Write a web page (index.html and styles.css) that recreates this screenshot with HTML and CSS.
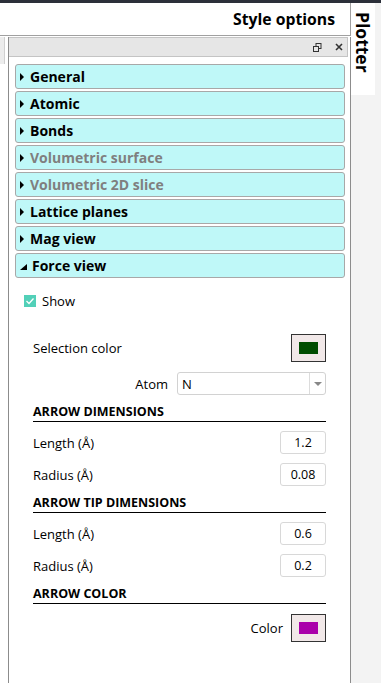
FILE: index.html
```html
<!DOCTYPE html>
<html lang="en">
<head>
  <meta charset="UTF-8" />
  <meta name="viewport" content="width=device-width, initial-scale=1.0"/>
  <title>Style options</title>
  <link rel="stylesheet" href="styles.css">
</head>
<body>
  <div class="topbar"></div>
  <div class="main">
    <div class="left">
      <div class="header">Style options</div>
      <div class="dock">
        <div class="gutter"><div class="stub"></div></div>
        <div class="panel">
          <div class="titlebar">
            <svg class="float-icon" width="9" height="9" viewBox="0 0 9 9">
              <rect x="3" y="0.5" width="5" height="5" fill="none" stroke="#333" stroke-width="1"/>
              <rect x="0.5" y="3.5" width="5" height="5" fill="#e6e6e6" stroke="#333" stroke-width="1"/>
            </svg>
            <svg class="close-icon" width="8" height="8" viewBox="0 0 8 8">
              <path d="M1 1 L7 7 M7 1 L1 7" stroke="#333" stroke-width="1.6"/>
            </svg>
          </div>
          <div class="body">
            <div class="section"><span class="arrow"></span>General</div>
            <div class="section"><span class="arrow"></span>Atomic</div>
            <div class="section"><span class="arrow"></span>Bonds</div>
            <div class="section disabled"><span class="arrow"></span>Volumetric surface</div>
            <div class="section disabled"><span class="arrow"></span>Volumetric 2D slice</div>
            <div class="section"><span class="arrow"></span>Lattice planes</div>
            <div class="section"><span class="arrow"></span>Mag view</div>
            <div class="section open">
              <svg class="open-arrow" width="7" height="6" viewBox="0 0 7 6"><polygon points="7,0 7,6 0,6" fill="#000"/></svg>
              Force view
            </div>

            <div class="form">
              <label class="check">
                <span class="box">
                  <svg width="12" height="12" viewBox="0 0 12 12"><path d="M2.5 6 L5 8.5 L9.5 3.5" fill="none" stroke="#fff" stroke-width="1.3"/></svg>
                </span>
                Show
              </label>

              <div class="row sel-row">
                <span>Selection color</span>
                <span class="swatch"><span class="fill green"></span></span>
              </div>

              <div class="row atom-row">
                <span class="atom-label">Atom</span>
                <div class="combo">
                  <span class="combo-val">N</span>
                  <span class="combo-btn"></span>
                </div>
              </div>

              <div class="group">ARROW DIMENSIONS</div>
              <div class="row field"><span>Length (Å)</span><span class="num">1.2</span></div>
              <div class="row field"><span>Radius (Å)</span><span class="num">0.08</span></div>

              <div class="group">ARROW TIP DIMENSIONS</div>
              <div class="row field"><span>Length (Å)</span><span class="num">0.6</span></div>
              <div class="row field"><span>Radius (Å)</span><span class="num">0.2</span></div>

              <div class="group">ARROW COLOR</div>
              <div class="row color-row">
                <span>Color</span>
                <span class="swatch"><span class="fill magenta"></span></span>
              </div>
            </div>
          </div>
        </div>
      </div>
    </div>
    <div class="side">
      <div class="tab">Plotter</div>
    </div>
  </div>
</body>
</html>
```

FILE: styles.css
```css
body {
  margin: 0;
  width: 381px;
  height: 683px;
  overflow: hidden;
  background: #fff;
  font-family: 'Open Sans', 'Noto Sans', sans-serif;
  font-size: 13px;
  color: #000;
}
.topbar {
  height: 3px;
  background: #2c303a;
}
.main {
  display: flex;
  height: 680px;
}
.left {
  width: 351px;
  display: flex;
  flex-direction: column;
}
.header {
  height: 33px;
  box-sizing: border-box;
  border-bottom: 1px solid #a0a0a0;
  border-right: 1px solid #a0a0a0;
  text-align: right;
  padding-right: 15px;
  font-weight: 700;
  font-size: 15.75px;
  line-height: 32px;
}
.dock {
  flex: 1;
  display: flex;
  padding-top: 1px;
}
.gutter {
  width: 8px;
}
.stub {
  width: 4px;
  height: 27px;
  background: #ececec;
  border-right: 1px solid #d0d0d0;
}
.panel {
  flex: 1;
  border-left: 1px solid #8c8c8c;
  border-right: 1px solid #8c8c8c;
  display: flex;
  flex-direction: column;
}
.titlebar {
  height: 18px;
  margin-right: 2px;
  background: #e6e6e6;
  border: 1px solid #c4c4c4;
  border-left: none;
  display: flex;
  align-items: center;
  justify-content: flex-end;
  gap: 13px;
  padding-right: 4px;
}
.body {
  padding: 7px 5px 0 6px;
}
.section {
  height: 25px;
  box-sizing: border-box;
  margin-bottom: 2px;
  background: #bff8f8;
  border: 1px solid #a8a8a8;
  border-radius: 3px;
  display: flex;
  align-items: center;
  padding-left: 4px;
  font-weight: 700;
  font-size: 14px;
}
.section.disabled {
  color: #7f7f7f;
}
.arrow {
  width: 0;
  height: 0;
  border-top: 4px solid transparent;
  border-bottom: 4px solid transparent;
  border-left: 4px solid #000;
  margin-right: 6px;
}
.open-arrow {
  margin-right: 5px;
  margin-top: 3px;
}
.form {
  padding: 15px 19px 0 9px;
}
.check {
  display: flex;
  align-items: center;
  gap: 6px;
  height: 12px;
}
.box {
  width: 12px;
  height: 12px;
  background: #52d0b8;
  display: flex;
}
.row {
  display: flex;
  align-items: center;
  justify-content: space-between;
  padding-left: 9px;
}
.sel-row {
  margin-top: 27px;
  height: 28px;
}
.swatch {
  width: 35px;
  height: 28px;
  box-sizing: border-box;
  border: 1px solid #333;
  background: #f1e8e8;
  display: flex;
  align-items: center;
  justify-content: center;
}
.fill {
  width: 19px;
  height: 12px;
}
.green {
  background: #004d00;
}
.magenta {
  background: #aa00aa;
}
.atom-row {
  margin-top: 10px;
  justify-content: flex-end;
  gap: 9px;
  height: 23px;
}
.combo {
  width: 149px;
  height: 23px;
  box-sizing: border-box;
  border: 1px solid #d2d2d2;
  border-radius: 3px;
  display: flex;
  align-items: center;
}
.combo-val {
  flex: 1;
  padding-left: 4px;
}
.combo-btn {
  width: 15px;
  height: 100%;
  border-left: 1px solid #dcdcdc;
  display: flex;
  align-items: center;
  justify-content: center;
}
.combo-btn::after {
  content: "";
  border-left: 4px solid transparent;
  border-right: 4px solid transparent;
  border-top: 4px solid #888;
}
.group {
  margin: 9px 0 0 9px;
  padding-bottom: 1px;
  border-bottom: 1px solid #000;
  font-weight: 700;
  font-size: 12.5px;
  line-height: 16px;
}
.field {
  height: 23px;
  margin-top: 9px;
}
.num {
  width: 46px;
  height: 23px;
  box-sizing: border-box;
  border: 1px solid #d8d8d8;
  border-radius: 3px;
  display: flex;
  align-items: center;
  justify-content: center;
  font-size: 12.5px;
}
.color-row {
  margin-top: 10px;
  justify-content: flex-end;
  gap: 8px;
  height: 28px;
}
.side {
  flex: 1;
  background: #f3f3f3;
}
.tab {
  height: 92px;
  background: #fff;
  writing-mode: vertical-rl;
  font-weight: 700;
  font-size: 17.5px;
  padding-top: 9px;
  box-sizing: border-box;
  display: flex;
  align-items: center;
}
```
